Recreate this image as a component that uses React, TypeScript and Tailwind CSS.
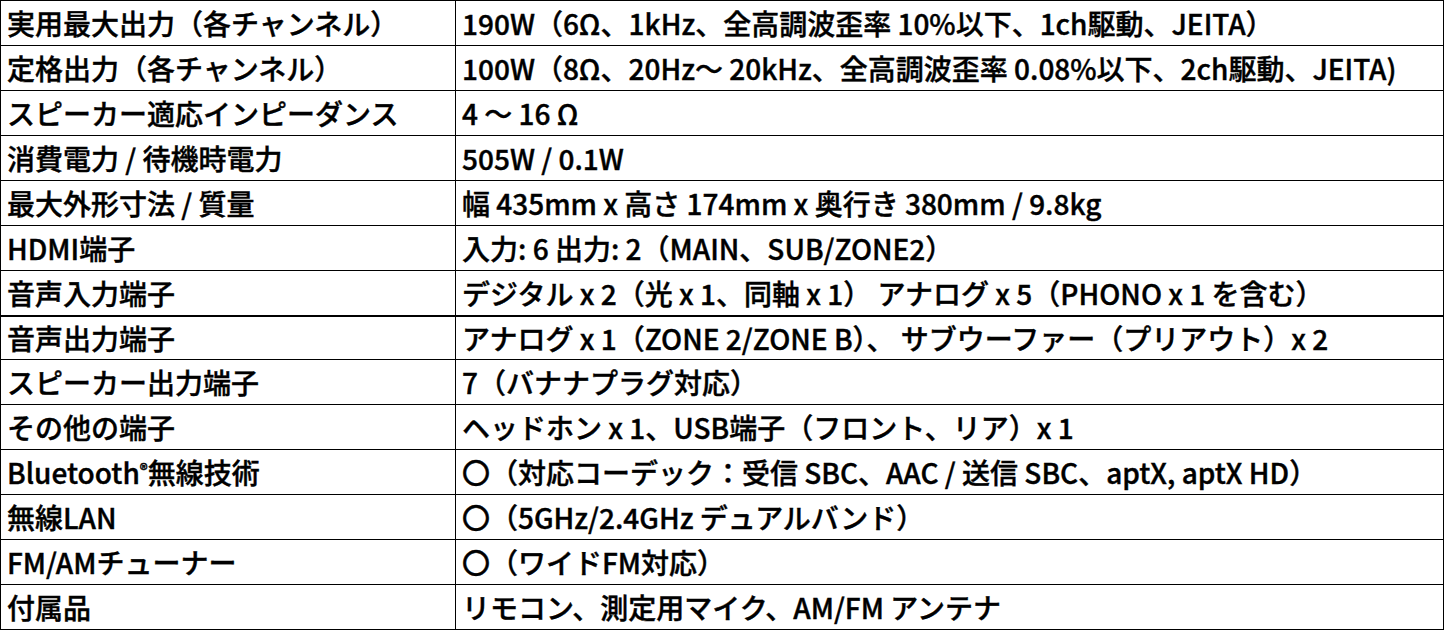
const rows: { label: React.ReactNode; value: string; h: string; b: string }[] = [
  { label: "実用最大出力（各チャンネル）", value: "190W（6Ω、1kHz、全高調波歪率 10%以下、1ch駆動、JEITA）", h: "h-[45px]", b: "border-b" },
  { label: "定格出力（各チャンネル）", value: "100W（8Ω、20Hz〜 20kHz、全高調波歪率 0.08%以下、2ch駆動、JEITA)", h: "h-[45px]", b: "border-b" },
  { label: "スピーカー適応インピーダンス", value: "4 〜 16 Ω", h: "h-[45px]", b: "border-b" },
  { label: "消費電力 / 待機時電力", value: "505W / 0.1W", h: "h-[45px]", b: "border-b" },
  { label: "最大外形寸法 / 質量", value: "幅 435mm x 高さ 174mm x 奥行き 380mm / 9.8kg", h: "h-[45px]", b: "border-b" },
  { label: "HDMI端子", value: "入力: 6 出力: 2（MAIN、SUB/ZONE2）", h: "h-[45px]", b: "border-b" },
  { label: "音声入力端子", value: "デジタル x 2（光 x 1、同軸 x 1） アナログ x 5（PHONO x 1 を含む）", h: "h-[46px]", b: "border-b-2" },
  { label: "音声出力端子", value: "アナログ x 1（ZONE 2/ZONE B）、 サブウーファー（プリアウト）x 2", h: "h-[43px]", b: "border-b" },
  { label: "スピーカー出力端子", value: "7（バナナプラグ対応）", h: "h-[45px]", b: "border-b" },
  { label: "その他の端子", value: "ヘッドホン x 1、USB端子（フロント、リア）x 1", h: "h-[45px]", b: "border-b" },
  {
    label: (
      <>
        Bluetooth<sup className="text-[16px] relative -top-[3px]">®</sup>無線技術
      </>
    ),
    value: "〇（対応コーデック：受信 SBC、AAC / 送信 SBC、aptX, aptX HD）",
    h: "h-[45px]",
    b: "border-b",
  },
  { label: "無線LAN", value: "〇（5GHz/2.4GHz デュアルバンド）", h: "h-[45px]", b: "border-b" },
  { label: "FM/AMチューナー", value: "〇（ワイドFM対応）", h: "h-[45px]", b: "border-b" },
  { label: "付属品", value: "リモコン、測定用マイク、AM/FM アンテナ", h: "h-[44px]", b: "" },
];

export default function App() {
  return (
    <div className="bg-white w-[1446px] h-[631px]">
      <div
        className="w-[1444px] border border-black text-black text-[28px] font-medium [-webkit-text-stroke:0.4px_black]"
        style={{ fontFamily: '"Noto Sans CJK JP", "Noto Sans", sans-serif' }}
      >
        {rows.map((r, i) => (
          <div key={i} className={`flex ${r.h} ${r.b} border-black`}>
            <div className="w-[455px] shrink-0 border-r border-black flex items-center pl-[6px] whitespace-nowrap leading-none">
              {r.label}
            </div>
            <div className="flex-1 flex items-center pl-[6px] whitespace-nowrap leading-none">{r.value}</div>
          </div>
        ))}
      </div>
    </div>
  );
}
